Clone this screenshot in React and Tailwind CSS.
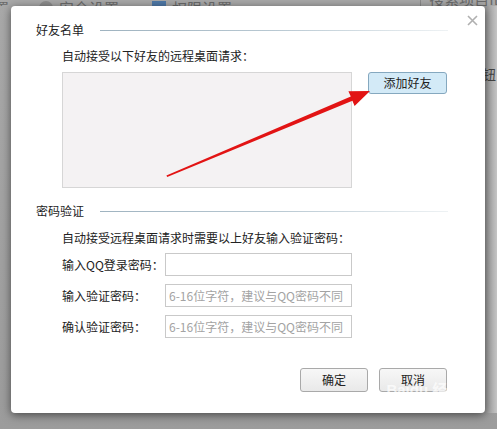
import React from 'react';

const font = { fontFamily: '"Noto Sans CJK SC", "Noto Sans", sans-serif' };

const SectionHeader = ({ title }) => (
    <div className="flex items-center h-4">
        <span className="text-[12px] leading-4 text-[#222]">{title}</span>
        <div className="ml-4 flex-1 h-px bg-gradient-to-r from-[#9fb3c0] via-[#b8c8d2] to-[#eef2f4]"></div>
    </div>
);

const PwdRow = ({ label, placeholder }) => (
    <div className="flex items-center">
        <span className="w-[103px] text-[12px] text-[#222]">{label}</span>
        <input
            type="text"
            placeholder={placeholder}
            className="w-[187px] h-[23px] border border-[#c9c9c9] bg-white px-[3px] text-[12px] outline-none placeholder:text-[#a3a3a3]"
            style={font}
        />
    </div>
);

const App = () => {
    return (
        <div className="relative w-[497px] h-[429px] overflow-hidden bg-gradient-to-b from-[#a9a9a9] to-[#9c9c9c]" style={font}>
            {/* app behind the dialog, only its bottom edge shows */}
            <div className="h-[6px] overflow-hidden flex items-end text-[15px] text-[#6b6b6b] leading-none">
                <span className="ml-[-6px] mb-[-9px]">置</span>
                <span className="ml-[30px] mb-[-9px] w-[14px] h-[14px] rounded-full bg-[#8d8d8d]"></span>
                <span className="ml-[6px] mb-[-9px]">安全设置</span>
                <span className="ml-[33px] mb-[-9px] w-[14px] h-[14px] bg-[#4f79a8]"></span>
                <span className="ml-[6px] mb-[-9px]">权限设置</span>
                <span className="ml-auto mr-[-16px] mb-[-9px] border border-[#8a8a8a] px-2 pb-2">搜索项目ID</span>
            </div>

            <div className="flex">
                <div className="w-[11px]"></div>
                <div className="relative w-[474px] h-[407px] bg-white rounded-[4px] shadow-[0_2px_10px_rgba(0,0,0,0.55)] pl-[25px] pr-[37px] pt-[16px]">
                    <svg className="absolute right-[7px] top-[9px]" width="11" height="11" viewBox="0 0 11 11">
                        <path d="M1 1L10 10M10 1L1 10" stroke="#b0b0b0" strokeWidth="1.6" />
                    </svg>

                    <SectionHeader title="好友名单" />
                    <div className="pl-[26px]">
                        <p className="mt-[10px] text-[12px] leading-4 text-[#222]">自动接受以下好友的远程桌面请求：</p>
                        <div className="mt-2 flex gap-4">
                            <div className="w-[290px] h-[116px] bg-[#f4f2f3] border border-[#d6d6d6]"></div>
                            <button className="w-[79px] h-[22px] bg-[#d3eaf7] border border-[#85a8bf] rounded-[3px] text-[12px] text-[#222]">
                                添加好友
                            </button>
                        </div>
                    </div>

                    <div className="mt-[15px]">
                        <SectionHeader title="密码验证" />
                    </div>
                    <div className="pl-[26px]">
                        <p className="mt-[11px] text-[12px] leading-4 text-[#222]">自动接受远程桌面请求时需要以上好友输入验证密码：</p>
                        <div className="mt-[7px] flex flex-col gap-2">
                            <PwdRow label="输入QQ登录密码：" placeholder="" />
                            <PwdRow label="输入验证密码：" placeholder="6-16位字符，建议与QQ密码不同" />
                            <PwdRow label="确认验证密码：" placeholder="6-16位字符，建议与QQ密码不同" />
                        </div>
                    </div>

                    <div className="mt-[30px] flex justify-end gap-[11px] pr-[1px]">
                        <button className="w-[68px] h-[24px] bg-gradient-to-b from-[#f7f7f7] to-[#e9e9e9] border border-[#a9a9a9] rounded-[3px] text-[12px] text-[#222]">确定</button>
                        <button className="w-[68px] h-[24px] bg-gradient-to-b from-[#f7f7f7] to-[#e9e9e9] border border-[#a9a9a9] rounded-[3px] text-[12px] text-[#222]">取消</button>
                    </div>
                </div>
                <div className="flex-1 bg-gradient-to-r from-[#9a9a9a] to-[#c4c4c4] pt-[58px]">
                    <span className="block text-[13px] text-[#444] ml-[-2px]">钮</span>
                </div>
            </div>

            {/* red annotation arrow */}
            <svg className="absolute inset-0 pointer-events-none" width="497" height="429" viewBox="0 0 497 429">
                <polygon
                    points="166.4,175.6 350.8,96.6 348.4,91.3 370,91 354.6,106.1 352.4,100.8 167.2,177"
                    fill="#e21414"
                />
            </svg>

            {/* watermark */}
            <div className="absolute left-[384px] top-[382px] flex flex-col items-center text-white/70 leading-none pointer-events-none" style={{ fontFamily: '"Liberation Sans", "Noto Sans CJK SC", sans-serif' }}>
                <span className="text-[15px] font-bold">Baidu 经验</span>
                <span className="mt-[3px] text-[10px]">jingyan.baidu.com</span>
            </div>
        </div>
    );
};

export default App;
